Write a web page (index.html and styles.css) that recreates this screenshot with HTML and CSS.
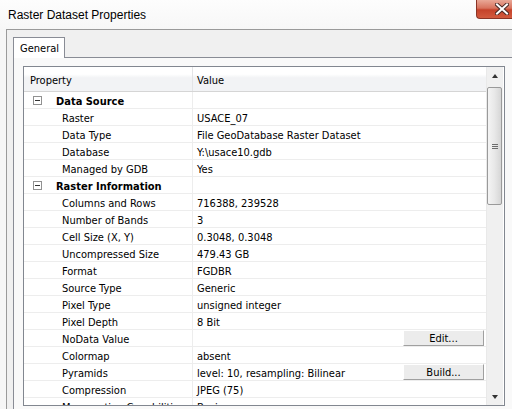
FILE: index.html
```html
<!DOCTYPE html>
<html>
<head>
<meta charset="utf-8">
<link rel="stylesheet" href="styles.css">
</head>
<body>
<div class="window">
  <div class="titlebar">
    <div class="title">Raster Dataset Properties</div>
    <div class="close">
      <svg width="14" height="12" viewBox="0 0 14 12"><path d="M2 1.5 L12 10.5 M12 1.5 L2 10.5" stroke="#4a2a26" stroke-width="4" stroke-linecap="square"/><path d="M2 1.5 L12 10.5 M12 1.5 L2 10.5" stroke="#ffffff" stroke-width="2" stroke-linecap="square"/></svg>
    </div>
  </div>
  <div class="client">
    <div class="tabs">
      <div class="tab">General</div>
      <div class="tab-fill"></div>
    </div>
    <div class="panel">
      <div class="grid">
        <div class="table">
          <div class="head">
            <div class="hc1">Property</div>
            <div class="hc2">Value</div>
          </div>
          <div class="row group"><div class="c1"><span class="box"></span>Data Source</div><div class="c2"></div></div>
          <div class="row"><div class="c1">Raster</div><div class="c2">USACE_07</div></div>
          <div class="row"><div class="c1">Data Type</div><div class="c2">File GeoDatabase Raster Dataset</div></div>
          <div class="row"><div class="c1">Database</div><div class="c2">Y:\usace10.gdb</div></div>
          <div class="row"><div class="c1">Managed by GDB</div><div class="c2">Yes</div></div>
          <div class="row group"><div class="c1"><span class="box"></span>Raster Information</div><div class="c2"></div></div>
          <div class="row"><div class="c1">Columns and Rows</div><div class="c2">716388, 239528</div></div>
          <div class="row"><div class="c1">Number of Bands</div><div class="c2">3</div></div>
          <div class="row"><div class="c1">Cell Size (X, Y)</div><div class="c2">0.3048, 0.3048</div></div>
          <div class="row"><div class="c1">Uncompressed Size</div><div class="c2">479.43 GB</div></div>
          <div class="row"><div class="c1">Format</div><div class="c2">FGDBR</div></div>
          <div class="row"><div class="c1">Source Type</div><div class="c2">Generic</div></div>
          <div class="row"><div class="c1">Pixel Type</div><div class="c2">unsigned integer</div></div>
          <div class="row"><div class="c1">Pixel Depth</div><div class="c2">8 Bit</div></div>
          <div class="row"><div class="c1">NoData Value</div><div class="c2"><span></span><span class="btn">Edit...</span></div></div>
          <div class="row"><div class="c1">Colormap</div><div class="c2">absent</div></div>
          <div class="row"><div class="c1">Pyramids</div><div class="c2"><span>level: 10, resampling: Bilinear</span><span class="btn">Build...</span></div></div>
          <div class="row"><div class="c1">Compression</div><div class="c2">JPEG (75)</div></div>
          <div class="row"><div class="c1">Mensuration Capabilities</div><div class="c2">Basic</div></div>
        </div>
        <div class="scroll">
          <div class="arrow up"></div>
          <div class="thumb"><span class="grip"></span></div>
          <div class="track"></div>
          <div class="arrow down"></div>
        </div>
      </div>
    </div>
  </div>
</div>
</body>
</html>
```

FILE: styles.css
```css
html, body {
  margin: 0;
  padding: 0;
}
body {
  width: 512px;
  height: 409px;
  overflow: hidden;
  background: #f6f6f6;
  font-family: Tahoma, "DejaVu Sans Condensed", "DejaVu Sans", sans-serif;
  font-stretch: condensed;
  font-size: 11px;
  color: #000;
}
.window {
  display: flex;
  flex-direction: column;
  height: 409px;
}
.titlebar {
  height: 29px;
  display: flex;
  justify-content: space-between;
  align-items: flex-start;
  background: linear-gradient(#fdfdfd, #f7f7f7);
}
.title {
  font-family: "Liberation Sans", Arial, sans-serif;
  font-stretch: normal;
  font-size: 12px;
  padding: 8px 0 0 8px;
  color: #000;
}
.close {
  width: 36px;
  height: 19px;
  box-sizing: border-box;
  border: 1px solid #8a3426;
  border-right: none;
  border-top: none;
  border-bottom-left-radius: 4px;
  background: linear-gradient(#e9a897 0%, #d8735e 45%, #c5422a 55%, #d25a3e 100%);
  display: flex;
  align-items: center;
  padding-left: 18px;
}
.close svg { display: block; }
.client {
  flex: 1;
  margin-left: 6px;
  border-top: 1px solid #9a9a9a;
  border-left: 1px solid #9a9a9a;
  background: #f0f0f0;
  padding: 7px 0 0 6px;
  display: flex;
  flex-direction: column;
}
.tabs {
  display: flex;
  height: 21px;
}
.tab {
  width: 52px;
  box-sizing: border-box;
  height: 21px;
  border: 1px solid #898c95;
  border-bottom: none;
  background: #ffffff;
  padding: 4px 0 0 6px;
}
.tab-fill {
  flex: 1;
  border-bottom: 1px solid #898c95;
}
.panel {
  flex: 1;
  border-left: 1px solid #898c95;
  background: #f9f9f9;
  padding: 8px 0 0 9px;
}
.grid {
  width: 482px;
  height: 340px;
  box-sizing: border-box;
  border: 1px solid #828790;
  background: #fff;
  display: flex;
}
.table {
  width: 462px;
  overflow: hidden;
  display: flex;
  flex-direction: column;
}
.head {
  flex: none;
  height: 25px;
  box-sizing: border-box;
  display: flex;
  border-bottom: 1px solid #d5d5d5;
  background: linear-gradient(#ffffff 0%, #ffffff 30%, #f2f3f5 45%, #f2f3f5 100%);
}
.hc1 {
  width: 169px;
  box-sizing: border-box;
  border-right: 1px solid #e3e4e6;
  padding: 7px 0 0 6px;
}
.hc2 {
  padding: 7px 0 0 4px;
}
.row {
  flex: none;
  height: 17px;
  box-sizing: border-box;
  display: flex;
  border-bottom: 1px solid #ededed;
}
.c1 {
  width: 169px;
  box-sizing: border-box;
  border-right: 1px solid #ededed;
  padding: 3px 0 0 38px;
  white-space: nowrap;
}
.c2 {
  flex: 1;
  padding: 3px 2px 0 4px;
  display: flex;
  justify-content: space-between;
  align-items: flex-start;
  white-space: nowrap;
}
.group .c1 {
  font-weight: bold;
  padding-left: 9px;
  display: flex;
  align-items: flex-start;
}
.box {
  width: 9px;
  height: 9px;
  box-sizing: border-box;
  border: 1px solid #919191;
  margin: 1px 14px 0 0;
  background: linear-gradient(#333, #333) center / 5px 1px no-repeat, #fff;
}
.btn {
  width: 81px;
  height: 16px;
  box-sizing: border-box;
  margin-top: -3px;
  border: 1px solid;
  border-color: #ffffff #a0a0a0 #a0a0a0 #ffffff;
  background: #ececec;
  text-align: center;
  padding-top: 1px;
  font-weight: normal;
}
.scroll {
  width: 17px;
  flex: none;
  display: flex;
  flex-direction: column;
  background: linear-gradient(to right, #e9e9e9 0, #e9e9e9 1px, #f0f0f0 1px);
}
.arrow {
  height: 17px;
  flex: none;
  display: flex;
  align-items: center;
  justify-content: center;
}
.up::before, .down::before {
  content: "";
  width: 0;
  height: 0;
  border-left: 3.5px solid transparent;
  border-right: 3.5px solid transparent;
}
.up::before {
  border-bottom: 4px solid #333;
  margin-left: 1px;
}
.down::before {
  border-top: 4px solid #333;
  margin-left: 1px;
}
.thumb {
  flex: none;
  height: 118px;
  margin: 3px 1px 0 1px;
  box-sizing: border-box;
  border: 1px solid #9a9a9a;
  border-radius: 2px;
  background: linear-gradient(to right, #f4f4f4 0%, #e8e8e8 50%, #d6d6d6 100%);
  display: flex;
  align-items: center;
  justify-content: center;
}
.grip {
  width: 6px;
  height: 5px;
  background: repeating-linear-gradient(#6c6c6c 0, #6c6c6c 1px, transparent 1px, transparent 2px);
}
.track {
  flex: 1;
}
```
